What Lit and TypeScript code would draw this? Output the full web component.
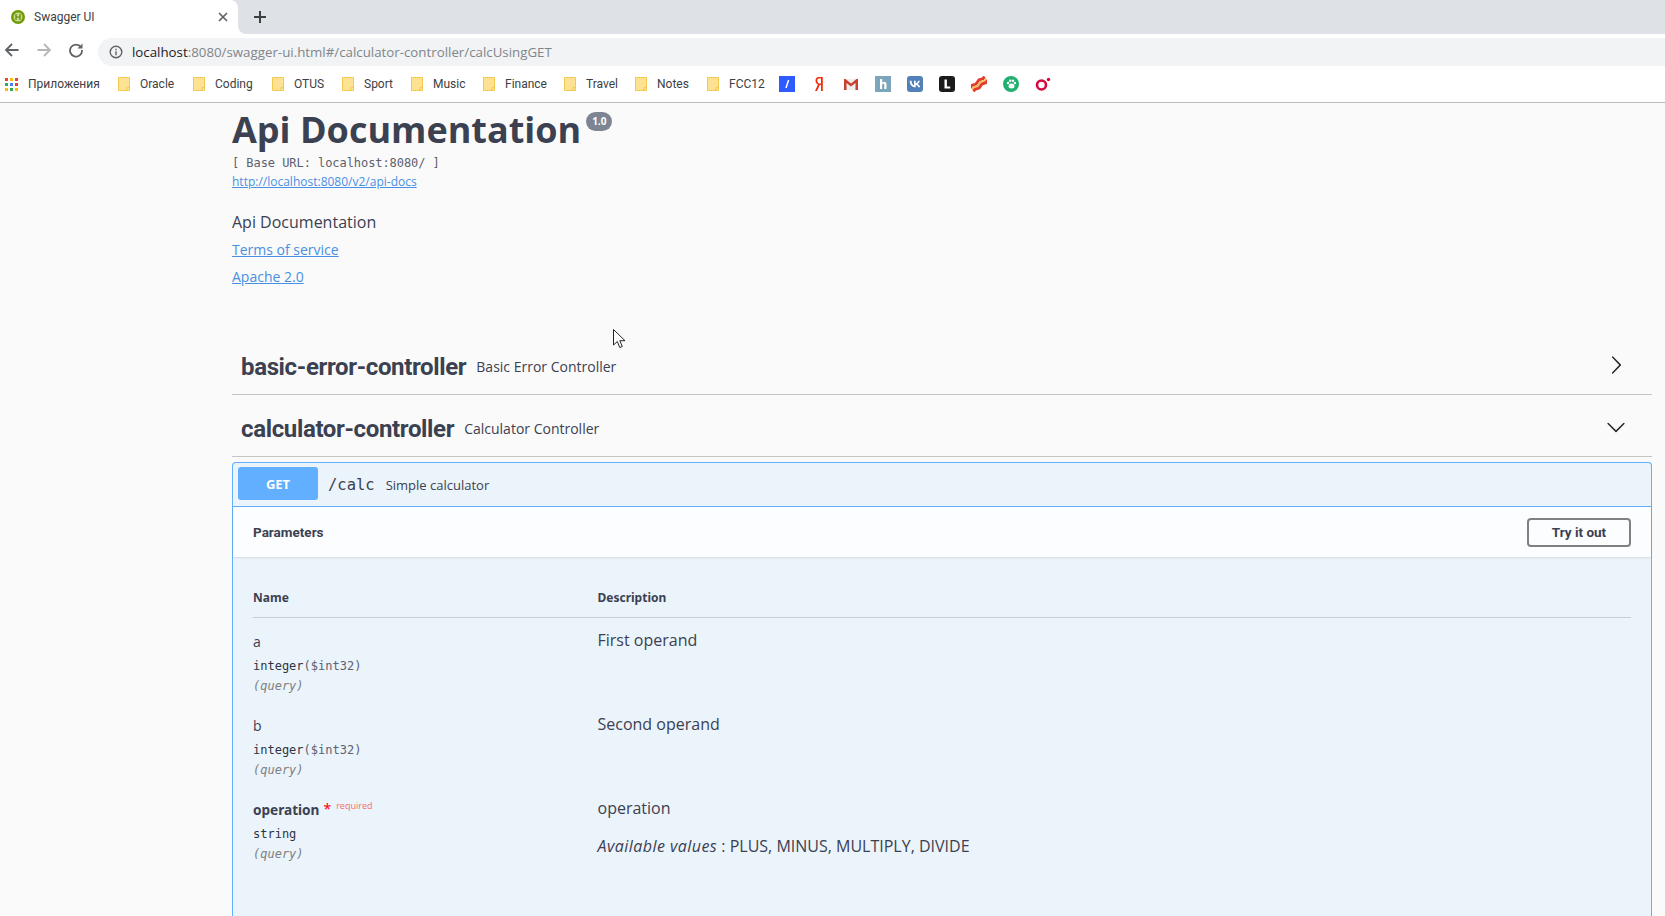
import { LitElement, html, css, svg } from "lit";
import { customElement } from "lit/decorators.js";

const folder = html`<svg class="folder" width="12" height="14" viewBox="0 0 12 14"><path d="M.5.5h11v13H.5z" fill="#fde293" stroke="#f4c94f"/><path d="M9 13.500v-3h2.500" fill="none" stroke="#f4c94f"/></svg>`;

const gridColors = ["#ea4335", "#fbbc05", "#ea4335", "#34a853", "#4285f4", "#ea4335", "#fbbc05", "#34a853", "#fbbc05"];

const folders = [
  ["Oracle", 75],
  ["Coding", 79],
  ["OTUS", 70],
  ["Sport", 69],
  ["Music", 72],
  ["Finance", 81],
  ["Travel", 71],
  ["Notes", 72],
  ["FCC12", 64],
] as const;

const arrow = "M13.25 10L6.109 2.58a.697.697 0 0 1 0-.979.68.68 0 0 1 .969 0l7.83 7.908a.697.697 0 0 1 0 .979l-7.83 7.908a.68.68 0 0 1-.969 0 .697.697 0 0 1 0-.979L13.25 10z";
const arrowDown = "M17.418 6.109a.697.697 0 0 1 .979 0 .68.68 0 0 1 0 .969l-7.908 7.83a.697.697 0 0 1-.979 0l-7.908-7.83a.68.68 0 0 1 0-.969.697.697 0 0 1 .979 0L10 13.25l7.418-7.141z";

const favs = [
  svg`<rect width="16" height="16" fill="#2e5bff"/><path d="M9.600 4 7 12" stroke="#fff" stroke-width="1.500"/>`,
  svg`<path d="M11 1H8C5.500 1 4.500 2.600 4.500 4.600S5.500 8 7 8.600L4 15h2l2.800-6H10v6h1.800V1zM10 7.500H8.400C7 7.500 6.300 6.200 6.300 4.600S7 2.500 8.400 2.500H10z" fill="#f32d0c"/>`,
  svg`<path d="M1 3h14v11H1z" fill="#eee"/><path d="M1 3v11h2.500V7L8 10.500 12.500 7v7H15V3h-1.500L8 7.500 2.500 3z" fill="#c8402f"/>`,
  svg`<rect width="16" height="16" fill="#7aa5ba"/><path d="M5 3h2.200v3.600c.6-.6 1.300-.8 2-.8 1.600 0 2.300 1 2.300 2.600V13H9.300V8.900c0-.8-.3-1.200-1-1.200s-1.100.5-1.100 1.200V13H5z" fill="#fff"/>`,
  svg`<rect width="16" height="16" rx="3" fill="#5181b8"/><path d="M8.600 11.300C4.900 11.300 2.800 8.800 2.700 4.700h1.800c.1 3 1.400 4.300 2.500 4.600V4.700h1.700v2.600c1-.1 2.100-1.300 2.500-2.600h1.700c-.3 1.600-1.500 2.800-2.300 3.300.8.400 2.200 1.500 2.700 3.300h-1.900c-.4-1.200-1.400-2.200-2.700-2.300v2.300z" fill="#fff"/>`,
  svg`<rect width="16" height="16" rx="3" fill="#1b1b1b"/><path d="M5.500 3.500h2.400v7h3.300v2H5.500z" fill="#fff"/>`,
  svg`<g transform="rotate(-38 8 8)"><path d="M-1 4q2.500-1.500 4.500 0t4.500 0 4.500 0 4.500 0v3q-2.500 1.500-4.500 0t-4.500 0-4.500 0-4.500 0z" fill="#e33b2e"/><path d="M-1 7q2.500-1.500 4.500 0t4.500 0 4.500 0 4.500 0v2q-2.500 1.500-4.500 0t-4.500 0-4.500 0-4.500 0z" fill="#f4c15a"/><path d="M-1 9q2.500-1.500 4.500 0t4.500 0 4.500 0 4.500 0v3q-2.500 1.500-4.500 0t-4.500 0-4.500 0-4.500 0z" fill="#e33b2e"/></g>`,
  svg`<circle cx="8" cy="8" r="8" fill="#20b070"/><ellipse cx="8.500" cy="10" rx="3" ry="2.500" fill="#fff"/><circle cx="5" cy="7" r="1.200" fill="#fff"/><circle cx="7.200" cy="4.800" r="1.200" fill="#fff"/><circle cx="10" cy="4.800" r="1.200" fill="#fff"/><circle cx="12" cy="7" r="1.200" fill="#fff"/>`,
  svg`<circle cx="6.500" cy="9" r="4.500" fill="none" stroke="#d6093f" stroke-width="2.600"/><circle cx="13.500" cy="3.500" r="1.700" fill="#d6093f"/>`,
];

const params = [
  { name: "a", type: "integer", fmt: "($int32)", desc: "First operand" },
  { name: "b", type: "integer", fmt: "($int32)", desc: "Second operand" },
  { name: "operation", type: "string", fmt: "", desc: "operation", required: true, values: "PLUS, MINUS, MULTIPLY, DIVIDE" },
];

@customElement("app-root")
export class AppRoot extends LitElement {
  static styles = css`
    :host {
      display: block;
      height: 916px;
      overflow: hidden;
      position: relative;
      background: #fafafa;
      font-family: "Open Sans", sans-serif;
      color: #3b4151;
    }
    .tabstrip { height: 34px; background: linear-gradient(#dee1e6 50%, #fff 50%); display: flex; align-items: stretch; }
    .tab {
      width: 238px; background: #fff; border-top-right-radius: 8px; flex: none;
      display: flex; align-items: center; box-sizing: border-box; padding-left: 11px; padding-right: 10px;
    }
    .tab-title { flex: 1; margin-left: 9px; font: 12px Roboto, sans-serif; color: #3c4043; }
    .tab-close { display: block; }
    .rest { flex: 1; background: #dee1e6; border-bottom-left-radius: 8px; display: flex; align-items: center; padding-left: 16px; }
    .newtab { display: block; }
    .toolbar { height: 32px; background: #fff; display: flex; align-items: center; padding-left: 4px; }
    .navs { display: flex; align-items: center; gap: 16px; width: 94px; flex: none; }
    .omni {
      flex: 1; height: 28px; background: #f1f3f4; border-radius: 14px 0 0 14px;
      display: flex; align-items: center; padding-left: 11px;
      font-family: "Open Sans", sans-serif; font-size: 13.300px; color: #80868b; margin-top: 3px;
    }
    .omni svg { margin-right: 9px; flex: none; }
    .host { color: #202124; }
    .bookmarks {
      height: 36px; background: #fff; border-bottom: 1px solid #bbb; display: flex; align-items: center;
      font: 12px Roboto, sans-serif; color: #3c4043; padding-left: 5px; box-sizing: content-box;
    }
    .apps { display: grid; grid-template-columns: repeat(3, 3px); gap: 2px; width: 13px; margin-right: 10px; flex: none; }
    .apps i { display: block; width: 3px; height: 3px; }
    .apps-label { width: 90px; flex: none; }
    .bm { display: flex; align-items: center; gap: 10px; flex: none; }
    .fav { width: 32px; display: flex; justify-content: center; flex: none; }
    .favs { display: flex; }

    main { padding: 5px 13px 0 232px; }
    .title { display: flex; align-items: flex-start; height: 45px; }
    h1 { margin: 0; font-size: 36px; line-height: 43px; font-weight: 700; color: #3b4151; }
    .badge {
      margin: 4px 0 0 5px; background: #7d8492; color: #fff; border-radius: 10px; height: 19px; width: 26px;
      font-size: 10px; font-weight: 700; line-height: 19px; text-align: center;
    }
    .base { font-family: "DejaVu Sans Mono", monospace; font-size: 12px; letter-spacing: -0.06px; line-height: 20px; color: #5a606e; }
    a { color: #4990e2; text-decoration: underline; display: block; width: max-content; }
    .url { font-size: 12px; line-height: 20px; margin-top: -1px; }
    .desc { font-size: 16px; line-height: 20px; margin-top: 20px; }
    .l1 { font-size: 14px; line-height: 20px; margin-top: 8px; }
    .l2 { font-size: 14px; line-height: 20px; margin-top: 7px; }
    .tag {
      height: 57px; padding: 4px 26px 0 9px; border-bottom: 1px solid #c5c5c5; display: flex; align-items: center;
    }
    .tag.first { margin-top: 46px; }
    .tag b { font-family: Roboto, sans-serif; font-size: 24px; font-weight: 700; letter-spacing: -0.35px; margin-top: 2px; }
    .tag span { font-size: 14px; margin: 2px 0 0 10px; flex: 1; }
    .tag svg { display: block; margin-top: -2px; }
    .op { margin-top: 5px; border: 1px solid #61affe; border-bottom: none; border-radius: 4px 4px 0 0; background: #ebf3fb; height: 460px; }
    .op-head { height: 44px; box-sizing: border-box; border-bottom: 1px solid #61affe; display: flex; align-items: center; padding: 0 5px 2px; }
    .method {
      width: 80px; height: 33px; background: #61affe; border-radius: 3px; color: #fff; font-size: 13px; font-weight: 700;
      display: flex; align-items: center; justify-content: center; font-family: "Noto Sans", sans-serif;
    }
    .path { font-family: "DejaVu Sans Mono", monospace; font-size: 15.500px; margin: 3px 0 0 10px; }
    .summary { font-size: 13px; margin: 2px 0 0 11px; }
    .sec {
      height: 50px; background: rgba(255, 255, 255, .8); box-shadow: 0 1px 2px rgba(0, 0, 0, .1);
      display: flex; align-items: center; justify-content: space-between; padding: 0 20px; box-sizing: border-box;
    }
    .sec h4 { margin: 0; font: 700 13.500px Roboto, sans-serif; }
    .try {
      width: 104px; height: 29px; border: 2px solid #808080; border-radius: 4px; background: transparent; box-sizing: border-box;
      font: 700 13.500px Roboto, sans-serif; color: #3b4151; padding: 0;
    }
    .params { padding: 0 20px; }
    .grid { display: grid; grid-template-columns: 344.500px 1fr; }
    .th { font-size: 12px; font-weight: 700; font-family: "Noto Sans", sans-serif; height: 61px; box-sizing: border-box; padding-top: 31px; line-height: 20px; border-bottom: 1px solid #c8cdd6; }
    .cell { height: 84px; }
    .pname { font-size: 14px; line-height: 20px; display: flex; align-items: flex-start; height: 20px; margin-top: 14px; }
    .pname.req { font-weight: 700; font-size: 13.600px; font-family: "Noto Sans", sans-serif; }
    .star { color: #f00; font-size: 14px; margin-left: 4px; font-weight: 400; line-height: 18px; }
    .reqt { color: #f93e3e; opacity: .75; font-size: 9px; font-weight: 400; margin-left: 5px; line-height: 10px; margin-top: 1px; font-family: "Open Sans", sans-serif; }
    .ptype { font-family: "DejaVu Sans Mono", monospace; font-size: 12px; line-height: 20px; margin-top: 4px; white-space: nowrap; color: #2f3441; }
    .ptype em { font-style: normal; color: #5b6170; }
    .pin { font-family: "DejaVu Sans Mono", monospace; font-size: 12px; line-height: 20px; font-style: italic; color: #808080; }
    .pdesc { font-size: 16px; line-height: 22px; margin-top: 11px; }
    .vals { font-size: 16px; line-height: 22px; margin-top: 16px; }
    .vals i { letter-spacing: .45px; }
    .cursor { position: absolute; left: 613px; top: 329px; display: block; }
  `;

  render() {
    return html`
      <div class="tabstrip">
        <div class="tab">
          <svg width="14" height="14" viewBox="0 0 14 14"><circle cx="7" cy="7" r="7" fill="#6f9a05"/><circle cx="7" cy="7" r="4.500" fill="#c9dc8c"/><path d="M5 4v6M9 4v6M5 7h4" stroke="#5d8404" stroke-width="1.200" fill="none"/></svg>
          <span class="tab-title">Swagger UI</span>
          <svg class="tab-close" width="10" height="10" viewBox="0 0 10 10"><path d="M1 1l8 8M9 1l-8 8" stroke="#5f6368" stroke-width="1.700"/></svg>
        </div>
        <div class="rest">
          <svg class="newtab" width="12" height="12" viewBox="0 0 12 12"><path d="M6 0v12M0 6h12" stroke="#3c4043" stroke-width="2"/></svg>
        </div>
      </div>
      <div class="toolbar">
        <div class="navs">
          <svg width="16" height="16" viewBox="0 0 16 16"><path d="M14.500 8H2M8 2 2 8l6 6" fill="none" stroke="#5f6368" stroke-width="1.800"/></svg>
          <svg width="16" height="16" viewBox="0 0 16 16"><path d="M1.500 8H14M8 2l6 6-6 6" fill="none" stroke="#b4b7ba" stroke-width="1.800"/></svg>
          <svg width="16" height="16" viewBox="0 0 16 16"><path d="M13 5.200A6 6 0 1 0 14 8" fill="none" stroke="#5f6368" stroke-width="1.800"/><path d="M14.500 1.500v5h-5z" fill="#5f6368"/></svg>
        </div>
        <div class="omni">
          <svg width="14" height="14" viewBox="0 0 14 14"><circle cx="7" cy="7" r="5.800" fill="none" stroke="#5f6368" stroke-width="1.400"/><path d="M7 6.200v4M7 3.800v1.400" stroke="#5f6368" stroke-width="1.400"/></svg>
          <span><span class="host">localhost</span>:8080/swagger-ui.html#/calculator-controller/calcUsingGET</span>
        </div>
      </div>
      <div class="bookmarks">
        <div class="apps">${gridColors.map((c) => html`<i style="background:${c}"></i>`)}</div>
        <span class="apps-label">Приложения</span>
        ${folders.map(([n, w]) => html`<div class="bm" style="width:${w}px">${folder}<span>${n}</span></div>`)}
        <div class="favs">
          ${favs.map((f) => html`<div class="fav"><svg width="16" height="16" viewBox="0 0 16 16">${f}</svg></div>`)}
        </div>
      </div>
      <main>
        <div class="title"><h1>Api Documentation</h1><div class="badge">1.0</div></div>
        <div class="base">[ Base URL: localhost:8080/ ]</div>
        <a class="url" href="#">http://localhost:8080/v2/api-docs</a>
        <div class="desc">Api Documentation</div>
        <a class="l1" href="#">Terms of service</a>
        <a class="l2" href="#">Apache 2.0</a>
        <div class="tag first">
          <b>basic-error-controller</b><span>Basic Error Controller</span>
          <svg width="20" height="20" viewBox="0 0 20 20"><path d="${arrow}" fill="#222"/></svg>
        </div>
        <div class="tag">
          <b>calculator-controller</b><span>Calculator Controller</span>
          <svg width="20" height="20" viewBox="0 0 20 20"><path d="${arrowDown}" fill="#222"/></svg>
        </div>
        <div class="op">
          <div class="op-head">
            <div class="method">GET</div>
            <div class="path">/calc</div>
            <div class="summary">Simple calculator</div>
          </div>
          <div class="sec"><h4>Parameters</h4><button class="try">Try it out</button></div>
          <div class="params">
            <div class="grid">
              <div class="th">Name</div><div class="th">Description</div>
              ${params.map(
                (p) => html`
                  <div class="cell">
                    <div class="pname ${p.required ? "req" : ""}">${p.name}${p.required
                      ? html`<span class="star">*</span><span class="reqt">required</span>`
                      : ""}</div>
                    <div class="ptype">${p.type}<em>${p.fmt}</em></div>
                    <div class="pin">(query)</div>
                  </div>
                  <div class="cell">
                    <div class="pdesc">${p.desc}</div>
                    ${p.values ? html`<div class="vals"><i>Available values</i> : ${p.values}</div>` : ""}
                  </div>
                `
              )}
            </div>
          </div>
        </div>
      </main>
      <svg class="cursor" width="13" height="20" viewBox="0 0 13 20"><path d="M.5.500v15.500l3.800-3.500 2.500 6 2.500-1-2.500-5.800h5.200z" fill="#fff" stroke="#222" stroke-width="1"/></svg>
    `;
  }
}
